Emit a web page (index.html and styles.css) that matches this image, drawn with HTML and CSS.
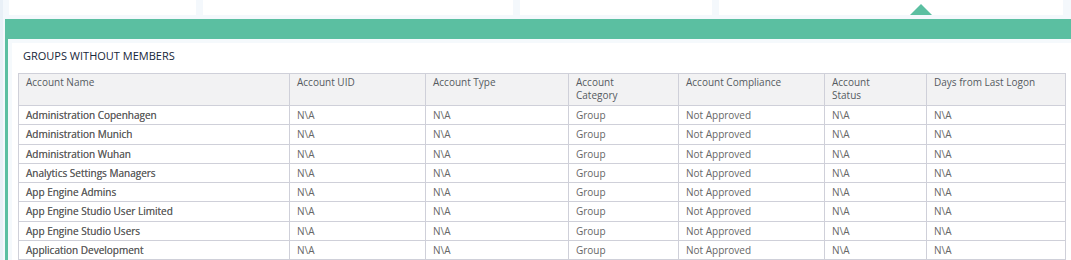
FILE: index.html
```html
<!DOCTYPE html>
<html lang="en">
<head>
  <meta charset="UTF-8" />
  <title>Groups without members</title>
  <link rel="stylesheet" href="styles.css">
</head>
<body>
<div class="page">
  <div class="tiles">
    <div class="tile t1"></div>
    <div class="tile t2"></div>
    <div class="tile t3"></div>
    <div class="tile t4 active"></div>
  </div>
  <div class="panel">
    <div class="panel-body">
      <div class="title">GROUPS WITHOUT MEMBERS</div>
      <table class="grid">
        <thead>
          <tr>
            <th class="c1">Account Name</th>
            <th class="c2">Account UID</th>
            <th class="c3">Account Type</th>
            <th class="c4">Account<br>Category</th>
            <th class="c5">Account Compliance</th>
            <th class="c6">Account<br>Status</th>
            <th class="c7">Days from Last Logon</th>
          </tr>
        </thead>
        <tbody id="rows"></tbody>
      </table>
    </div>
  </div>
</div>
<script>
  const names = [
    "Administration Copenhagen",
    "Administration Munich",
    "Administration Wuhan",
    "Analytics Settings Managers",
    "App Engine Admins",
    "App Engine Studio User Limited",
    "App Engine Studio Users",
    "Application Development"
  ];
  const rows = document.getElementById("rows");
  names.forEach(name => {
    const tr = document.createElement("tr");
    tr.innerHTML = `<td class="name">${name}</td><td>N\\A</td><td>N\\A</td><td>Group</td><td>Not Approved</td><td>N\\A</td><td>N\\A</td>`;
    rows.appendChild(tr);
  });
</script>
</body>
</html>
```

FILE: styles.css
```css
body { margin: 0; font-family: 'Open Sans', sans-serif; background: #f4f8fc; overflow: hidden; }
.page { height: 260px; border-left: 3px solid #e9f0f7; }
.tiles { display: flex; gap: 7px; padding-left: 6px; height: 15px; }
.tile { background: #fff; height: 15px; }
.t1 { width: 187px; }
.t2 { width: 310px; }
.t3 { width: 192px; }
.t4 { width: 344px; position: relative; }
.active::after { content: ""; position: absolute; left: 191px; bottom: 0; border-left: 11px solid transparent; border-right: 11px solid transparent; border-bottom: 11px solid #5bbfa1; }
.panel { margin-top: 4px; margin-left: 2px; border-top: 20px solid #5bbfa1; border-left: 3px solid #5bbfa1; padding: 4px 0 0 4px; background: #f5f9fc; }
.panel-body { background: #fff; padding: 0 6px 0 6px; height: 300px; }
.title { font-size: 11px; color: #16263a; padding: 7px 0 0 5px; height: 23px; line-height: 11px; }
.grid { border-collapse: collapse; font-size: 10px; width: 1047px; table-layout: fixed; }
.grid th, .grid td { border: 1px solid #cfd0d9; text-align: left; padding: 3px 7px; }
.grid th { background: #f2f2f3; color: #555a61; font-weight: 400; vertical-align: top; line-height: 13px; height: 24px; padding-top: 2px; }
.grid td { color: #666; line-height: 12.25px; }
.grid td.name { color: #616161; text-shadow: 0 0 0.3px #616161; }
.c1 { width: 256px; }
.c2 { width: 121px; }
.c3 { width: 128px; }
.c4 { width: 95px; }
.c5 { width: 131px; }
.c6 { width: 87px; }
.c7 { width: 124px; }
```
